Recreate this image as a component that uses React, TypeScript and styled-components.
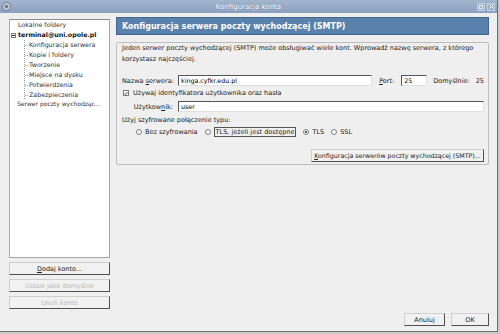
import React from "react";
import styled, { createGlobalStyle } from "styled-components";

const Global = createGlobalStyle`
  html, body { margin: 0; padding: 0; width: 500px; height: 334px; overflow: hidden; background: #c9c9c9; }
  body { font-family: "DejaVu Sans", "Liberation Sans", sans-serif; font-size: 6.5px; color: #222; }
  #root { width: 500px; height: 334px; }
`;

const Window = styled.div`
  width: 497px;
  height: 331px;
  background: #efefef;
  border-right: 1px solid #6f6f6f;
  border-bottom: 1px solid #6f6f6f;
  display: flex;
  flex-direction: column;
`;

const TitleBar = styled.div`
  height: 13px;
  flex: none;
  display: grid;
  grid-template-columns: 1fr auto 1fr;
  align-items: center;
  background: linear-gradient(#a3b6cf, #8aa0be);
  color: #fff;
  padding: 0 2px;
`;

const TitleText = styled.div`
  font-size: 7px;
  text-shadow: 0 0 1px #5d7496;
`;

const TitleButtons = styled.div`
  justify-self: end;
  display: flex;
  gap: 2px;
`;

const TitleBtn = styled.div`
  width: 8px;
  height: 8px;
  border: 1px solid #c6d3e4;
  box-sizing: border-box;
  display: flex;
  align-items: center;
  justify-content: center;
  background: #9ab0cc;
`;

const Body = styled.div`
  flex: 1;
  display: flex;
  gap: 6px;
  padding: 4px 8px 5px 9px;
  min-height: 0;
`;

const LeftColumn = styled.div`
  width: 101px;
  flex: none;
  display: flex;
  flex-direction: column;
  gap: 4px;
  padding: 2px 0 17px;
`;

const Tree = styled.div`
  flex: 1;
  background: #fff;
  border: 1px solid #a6a6a6;
  border-top-color: #8c8c8c;
  color: #333;
  font-size: 6.3px;
  overflow: hidden;
`;

const TreeRow = styled.div<{ $indent: number; $bold?: boolean; $size?: number }>`
  height: 10px;
  line-height: 10px;
  padding-left: ${(p) => p.$indent}px;
  font-weight: ${(p) => (p.$bold ? "bold" : "normal")};
  font-size: ${(p) => p.$size ?? 6.3}px;
  color: ${(p) => (p.$bold ? "#111" : "#333")};
  white-space: nowrap;
  display: flex;
  align-items: center;
  gap: 2px;
`;

const Expander = styled.span`
  width: 5px;
  height: 5px;
  border: 1px solid #777;
  box-sizing: border-box;
  display: inline-flex;
  align-items: center;
  justify-content: center;
  &::after {
    content: "";
    width: 3px;
    height: 1px;
    background: #333;
  }
`;

const Children = styled.div`
  margin-left: 14px;
  border-left: 1px dotted #9a9a9a;
  height: 59px;
`;

const ChildRow = styled.div`
  height: 10px;
  line-height: 10px;
  display: flex;
  align-items: center;
  white-space: nowrap;
  &::before {
    content: "";
    width: 3px;
    border-top: 1px dotted #9a9a9a;
    margin-right: 1px;
  }
`;

const Button = styled.div<{ $disabled?: boolean; $width?: number }>`
  height: 13px;
  box-sizing: border-box;
  ${(p) => (p.$width ? `width: ${p.$width}px;` : "")}
  display: flex;
  align-items: center;
  justify-content: center;
  background: #f1f1f1;
  border: 1px solid;
  border-color: #cfcfcf #505050 #505050 #cfcfcf;
  color: ${(p) => (p.$disabled ? "#b9b9b9" : "#222")};
  white-space: nowrap;
  flex: none;
`;

const WideButton = styled(Button)`
  font-size: 6.3px;
`;

const Acc = styled.span`
  text-decoration: underline;
`;

const RightColumn = styled.div`
  flex: 1;
  display: flex;
  flex-direction: column;
  min-width: 0;
`;

const Header = styled.div`
  height: 18px;
  box-sizing: border-box;
  background: #5a81ac;
  border: 1px solid #3e6690;
  color: #fff;
  font-weight: bold;
  font-size: 8px;
  display: flex;
  align-items: center;
  padding-left: 5px;
  margin-bottom: 7px;
  flex: none;
`;

const Box = styled.div`
  height: 123px;
  box-sizing: border-box;
  border: 1px solid #bdbdbd;
  border-radius: 2px;
  padding: 0 4px 2px 5px;
  display: flex;
  flex-direction: column;
  flex: none;
`;

const Description = styled.div`
  line-height: 11px;
  color: #222;
  margin-bottom: 10px;
  white-space: nowrap;
`;

const FieldRow = styled.div<{ $mt?: number }>`
  display: flex;
  align-items: center;
  height: 11px;
  margin-top: ${(p) => p.$mt ?? 0}px;
`;

const Label = styled.div`
  width: 51px;
  text-align: right;
  margin-right: 5px;
  white-space: nowrap;
  flex: none;
`;

const Input = styled.div<{ $width?: number }>`
  height: 11px;
  box-sizing: border-box;
  background: #fff;
  border: 1px solid;
  border-color: #555 #e0e0e0 #e0e0e0 #555;
  ${(p) => (p.$width ? `width: ${p.$width}px; flex: none;` : "flex: 1;")}
  font-size: 6.3px;
  color: #000;
  padding-left: 2px;
  display: flex;
  align-items: center;
  white-space: nowrap;
`;

const Inline = styled.span<{ $ml: number }>`
  margin-left: ${(p) => p.$ml}px;
  white-space: nowrap;
`;

const CheckRow = styled.div`
  height: 10px;
  margin-top: 2px;
  display: flex;
  align-items: center;
  gap: 4px;
  padding-left: 1px;
`;

const CheckBox = styled.span`
  width: 6px;
  height: 6px;
  box-sizing: border-box;
  border: 1px solid #7a7a7a;
  background: #fff;
  display: inline-flex;
  align-items: center;
  justify-content: center;
`;

const PlainRow = styled.div<{ $mt: number }>`
  height: 9px;
  line-height: 9px;
  margin-top: ${(p) => p.$mt}px;
`;

const RadioRow = styled.div`
  height: 10px;
  margin-top: 2px;
  display: flex;
  align-items: center;
  gap: 7px;
  padding-left: 14px;
`;

const Option = styled.div`
  display: flex;
  align-items: center;
  gap: 3px;
  white-space: nowrap;
`;

const Radio = styled.span<{ $checked?: boolean }>`
  width: 6px;
  height: 6px;
  box-sizing: border-box;
  border-radius: 50%;
  border: 1px solid #7d7d7d;
  background: #fff;
  display: inline-flex;
  align-items: center;
  justify-content: center;
  &::after {
    content: "";
    width: 2px;
    height: 2px;
    border-radius: 50%;
    background: ${(p) => (p.$checked ? "#222" : "transparent")};
  }
`;

const Focused = styled.span`
  border: 1px solid #555;
  padding: 0 1px;
  line-height: 8px;
`;

const ButtonRow = styled.div<{ $mt: number }>`
  display: flex;
  justify-content: flex-end;
  gap: 6px;
  margin-top: ${(p) => p.$mt}px;
`;

const Spacer = styled.div`
  flex: 1;
`;

export default function App() {
  return (
    <>
      <Global />
      <Window>
        <TitleBar>
          <svg width="9" height="9" viewBox="0 0 9 9">
            <circle cx="4.5" cy="4.5" r="4" fill="#d9dde4" stroke="#4d5a6d" strokeWidth="0.8" />
            <path d="M2 4.5 L4.5 2 L7 4.5 L4.5 7 Z" fill="#6d7c93" />
          </svg>
          <TitleText>Konfiguracja konta</TitleText>
          <TitleButtons>
            <TitleBtn>
              <svg width="4" height="4" viewBox="0 0 4 4">
                <rect x="0.5" y="0.5" width="3" height="3" fill="none" stroke="#fff" strokeWidth="0.8" />
              </svg>
            </TitleBtn>
            <TitleBtn>
              <svg width="5" height="5" viewBox="0 0 5 5">
                <path d="M0.5 0.5 L4.5 4.5 M4.5 0.5 L0.5 4.5" stroke="#fff" strokeWidth="1" />
              </svg>
            </TitleBtn>
          </TitleButtons>
        </TitleBar>
        <Body>
          <LeftColumn>
            <Tree>
              <TreeRow $indent={8}>Lokalne foldery</TreeRow>
              <TreeRow $indent={1} $bold>
                <Expander />
                terminal@uni.opole.pl
              </TreeRow>
              <Children>
                <ChildRow>Konfiguracja serwera</ChildRow>
                <ChildRow>Kopie i foldery</ChildRow>
                <ChildRow>Tworzenie</ChildRow>
                <ChildRow>Miejsce na dysku</ChildRow>
                <ChildRow>Potwierdzenia</ChildRow>
                <ChildRow>Zabezpieczenia</ChildRow>
              </Children>
              <TreeRow $indent={7} $size={6}>Serwer poczty wychodząc...</TreeRow>
            </Tree>
            <Button>
              <span>
                <Acc>D</Acc>odaj konto...
              </span>
            </Button>
            <Button $disabled>Ustaw jako domyślne</Button>
            <Button $disabled>Usuń konto</Button>
          </LeftColumn>
          <RightColumn>
            <Header>Konfiguracja serwera poczty wychodzącej (SMTP)</Header>
            <Box>
              <Description>
                Jeden serwer poczty wychodzącej (SMTP) może obsługiwać wiele kont. Wprowadź nazwę serwera, z którego
                <br />
                korzystasz najczęściej.
              </Description>
              <FieldRow>
                <Label>
                  Nazwa <Acc>s</Acc>erwera:
                </Label>
                <Input>kinga.cyfkr.edu.pl</Input>
                <Inline $ml={7}>
                  <Acc>P</Acc>ort:
                </Inline>
                <Inline $ml={7}>
                  <Input $width={26}>25</Input>
                </Inline>
                <Inline $ml={6}>Domyślnie:</Inline>
                <Inline $ml={6}>25</Inline>
              </FieldRow>
              <CheckRow>
                <CheckBox>
                  <svg width="5" height="5" viewBox="0 0 5 5">
                    <path d="M0.6 2.4 L2 4 L4.5 0.6" fill="none" stroke="#333" strokeWidth="1" />
                  </svg>
                </CheckBox>
                Używaj identyfikatora użytkownika oraz hasła
              </CheckRow>
              <FieldRow $mt={3}>
                <Label>
                  Użytkow<Acc>n</Acc>ik:
                </Label>
                <Input>user</Input>
              </FieldRow>
              <PlainRow $mt={4}>Użyj szyfrowane połączenie typu:</PlainRow>
              <RadioRow>
                <Option>
                  <Radio />
                  Bez szyfrowania
                </Option>
                <Option>
                  <Radio />
                  <Focused>TLS, jeżeli jest dostępne</Focused>
                </Option>
                <Option>
                  <Radio $checked />
                  TLS
                </Option>
                <Option>
                  <Radio />
                  SSL
                </Option>
              </RadioRow>
              <ButtonRow $mt={12}>
                <WideButton $width={173}>
                  <span>
                    <Acc>K</Acc>onfiguracja serwerów poczty wychodzącej (SMTP)...
                  </span>
                </WideButton>
              </ButtonRow>
            </Box>
            <Spacer />
            <ButtonRow $mt={0}>
              <Button $width={41}>Anuluj</Button>
              <Button $width={38}>OK</Button>
            </ButtonRow>
          </RightColumn>
        </Body>
      </Window>
    </>
  );
}
